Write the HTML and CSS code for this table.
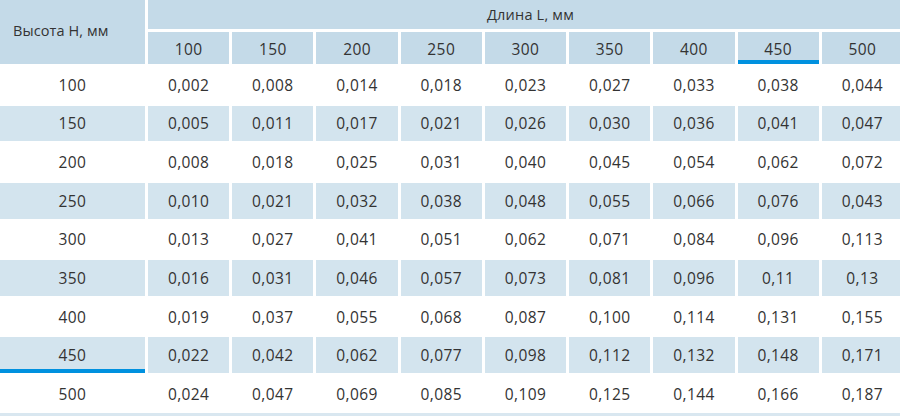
FILE: index.html
```html
<!DOCTYPE html>
<html lang="ru">
<head>
<meta charset="utf-8">
<title>Таблица</title>
<link rel="stylesheet" href="styles.css">
</head>
<body>
<div class="table">
  <div class="cell head corner">Высота H, мм</div>
  <div class="cell head span">Длина L, мм</div>
  <div class="cell head sub">100</div>
  <div class="cell head sub">150</div>
  <div class="cell head sub">200</div>
  <div class="cell head sub">250</div>
  <div class="cell head sub">300</div>
  <div class="cell head sub">350</div>
  <div class="cell head sub">400</div>
  <div class="cell head sub mark">450</div>
  <div class="cell head sub">500</div>

  <div class="cell">100</div><div class="cell">0,002</div><div class="cell">0,008</div><div class="cell">0,014</div><div class="cell">0,018</div><div class="cell">0,023</div><div class="cell">0,027</div><div class="cell">0,033</div><div class="cell">0,038</div><div class="cell">0,044</div>
  <div class="cell alt">150</div><div class="cell alt">0,005</div><div class="cell alt">0,011</div><div class="cell alt">0,017</div><div class="cell alt">0,021</div><div class="cell alt">0,026</div><div class="cell alt">0,030</div><div class="cell alt">0,036</div><div class="cell alt">0,041</div><div class="cell alt">0,047</div>
  <div class="cell">200</div><div class="cell">0,008</div><div class="cell">0,018</div><div class="cell">0,025</div><div class="cell">0,031</div><div class="cell">0,040</div><div class="cell">0,045</div><div class="cell">0,054</div><div class="cell">0,062</div><div class="cell">0,072</div>
  <div class="cell alt">250</div><div class="cell alt">0,010</div><div class="cell alt">0,021</div><div class="cell alt">0,032</div><div class="cell alt">0,038</div><div class="cell alt">0,048</div><div class="cell alt">0,055</div><div class="cell alt">0,066</div><div class="cell alt">0,076</div><div class="cell alt">0,043</div>
  <div class="cell">300</div><div class="cell">0,013</div><div class="cell">0,027</div><div class="cell">0,041</div><div class="cell">0,051</div><div class="cell">0,062</div><div class="cell">0,071</div><div class="cell">0,084</div><div class="cell">0,096</div><div class="cell">0,113</div>
  <div class="cell alt">350</div><div class="cell alt">0,016</div><div class="cell alt">0,031</div><div class="cell alt">0,046</div><div class="cell alt">0,057</div><div class="cell alt">0,073</div><div class="cell alt">0,081</div><div class="cell alt">0,096</div><div class="cell alt">0,11</div><div class="cell alt">0,13</div>
  <div class="cell">400</div><div class="cell">0,019</div><div class="cell">0,037</div><div class="cell">0,055</div><div class="cell">0,068</div><div class="cell">0,087</div><div class="cell">0,100</div><div class="cell">0,114</div><div class="cell">0,131</div><div class="cell">0,155</div>
  <div class="cell alt mark">450</div><div class="cell alt">0,022</div><div class="cell alt">0,042</div><div class="cell alt">0,062</div><div class="cell alt">0,077</div><div class="cell alt">0,098</div><div class="cell alt">0,112</div><div class="cell alt">0,132</div><div class="cell alt">0,148</div><div class="cell alt">0,171</div>
  <div class="cell">500</div><div class="cell">0,024</div><div class="cell">0,047</div><div class="cell">0,069</div><div class="cell">0,085</div><div class="cell">0,109</div><div class="cell">0,125</div><div class="cell">0,144</div><div class="cell">0,166</div><div class="cell">0,187</div>
</div>
</body>
</html>
```
FILE: styles.css
```css
html, body {
  margin: 0;
  padding: 0;
  background: #ffffff;
  overflow: hidden;
}

.table {
  width: 903px;
  display: grid;
  grid-template-columns: 145px repeat(9, 1fr);
  grid-template-rows: 29px 32px repeat(9, 35.65px);
  gap: 3px;
  padding-bottom: 1px;
  border-bottom: 3px solid #d9e7f0;
  font-family: "Open Sans", "Noto Sans", "DejaVu Sans", sans-serif;
  color: #333333;
  font-size: 15.5px;
  letter-spacing: 0.4px;
}

.cell {
  display: flex;
  align-items: center;
  justify-content: center;
  background: #ffffff;
}

.head {
  background: #c4dae8;
}

.corner {
  grid-row: 1 / 3;
  justify-content: flex-start;
  padding-left: 13px;
  padding-bottom: 4px;
  font-size: 14.5px;
  letter-spacing: 0.1px;
}

.span {
  grid-column: 2 / 11;
  padding-left: 10px;
  font-size: 14.5px;
  letter-spacing: 0.2px;
}

.sub {
  padding-top: 2px;
}

.alt {
  background: #d3e4ee;
}

.mark {
  box-shadow: inset 0 -4px 0 #0091df;
}
```
